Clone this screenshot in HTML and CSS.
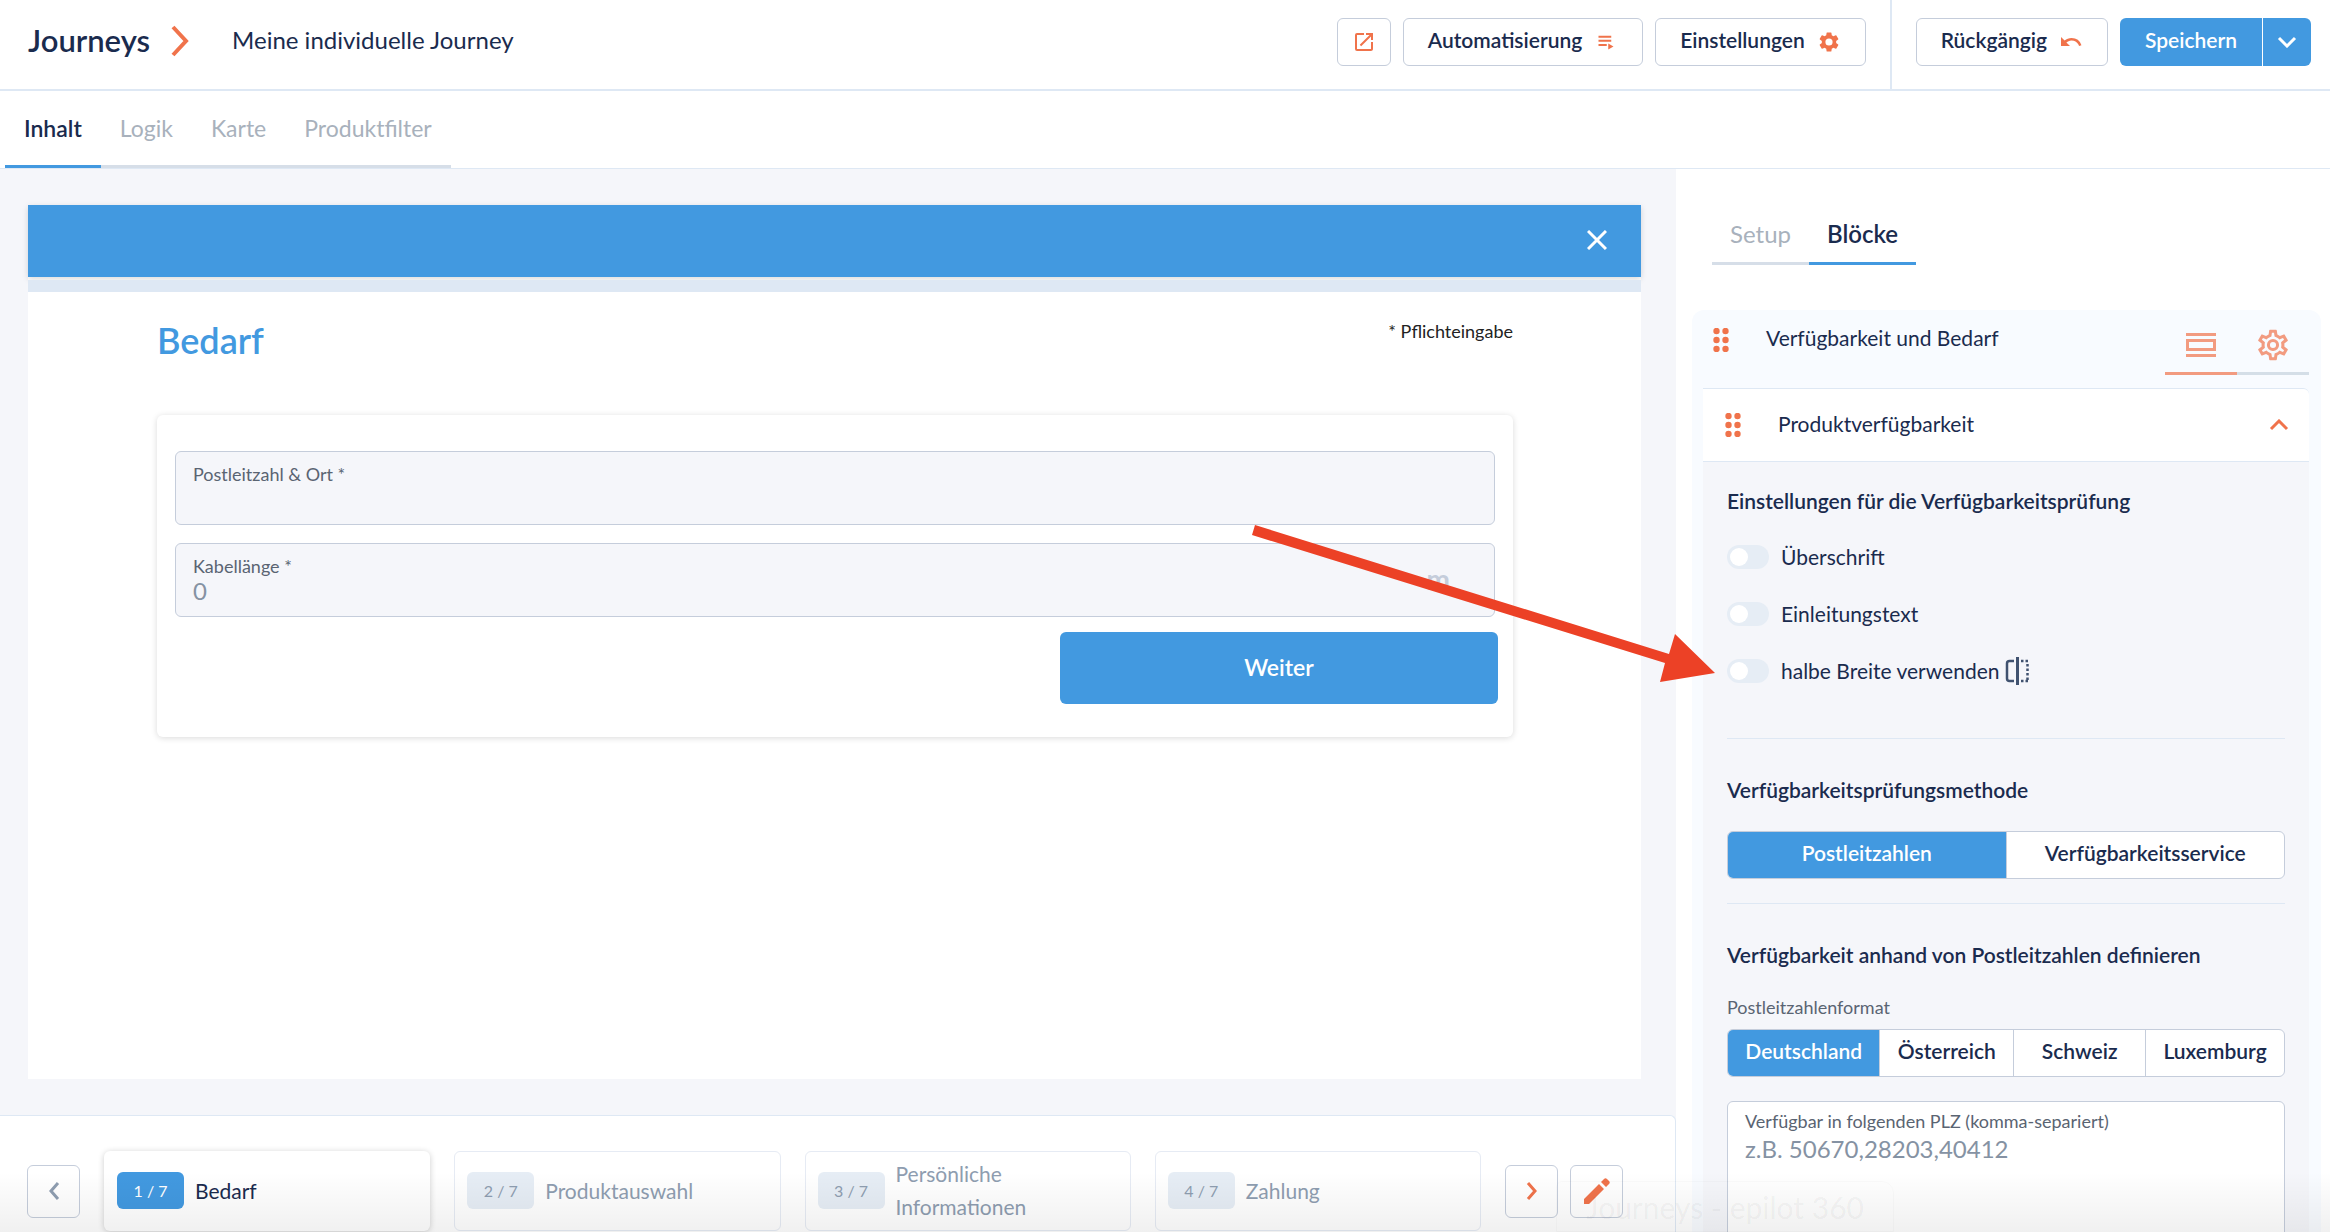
FILE: index.html
```html
<!DOCTYPE html>
<html lang="de">
<head>
<meta charset="utf-8">
<title>Journeys</title>
<link rel="stylesheet" href="styles.css">
</head>
<body>
<div class="app">
  <header class="topbar">
    <nav class="crumbs">
      <a class="crumb-root" href="#">Journeys</a>
      <svg class="crumb-sep" viewBox="0 0 20 32" width="20" height="32"><path d="M3 2l13 14L3 30" fill="none" stroke="currentColor" stroke-width="4"/></svg>
      <span class="crumb-name">Meine individuelle Journey</span>
    </nav>
    <div class="actions">
      <button class="btn btn-icon" type="button" aria-label="Öffnen"><svg viewBox="0 0 24 24" width="24" height="24" fill="currentColor"><path d="M19 19H5V5h7V3H5a2 2 0 0 0-2 2v14a2 2 0 0 0 2 2h14c1.100 0 2-.9 2-2v-7h-2v7zM14 3v2h3.590l-9.830 9.830 1.410 1.410L19 6.410V10h2V3h-7z"/></svg></button>
      <button class="btn" type="button"><span>Automatisierung</span><svg viewBox="-3 -3 32 32" width="24" height="24" fill="currentColor"><path d="M3 4.500h17v2.700H3zM3 10h17v2.700H3zM3 15.500h11v2.700H3zM16 15l7 4-7 4z"/></svg></button>
      <button class="btn" type="button"><span>Einstellungen</span><svg viewBox="0 0 24 24" width="24" height="24" fill="currentColor"><path d="M19.140 12.940c.04-.3.060-.61.060-.94 0-.32-.02-.64-.07-.94l2.030-1.580a.49.49 0 0 0 .12-.61l-1.920-3.320a.49.49 0 0 0-.59-.22l-2.390.96a7 7 0 0 0-1.620-.94l-.36-2.540a.48.48 0 0 0-.48-.41h-3.840a.47.47 0 0 0-.47.41l-.36 2.540c-.59.24-1.130.57-1.620.94l-2.390-.96a.47.47 0 0 0-.59.22L2.740 8.870a.47.47 0 0 0 .12.610l2.030 1.580c-.05.3-.09.63-.09.94s.02.640.070.940l-2.030 1.580a.49.49 0 0 0-.12.610l1.920 3.320c.12.220.370.290.590.220l2.390-.96c.5.380 1.030.7 1.620.940l.36 2.540c.05.240.240.410.480.410h3.840c.24 0 .44-.17.470-.41l.36-2.540c.59-.24 1.130-.56 1.620-.94l2.390.96c.22.080.470 0 .59-.22l1.920-3.320a.47.47 0 0 0-.12-.61l-2.010-1.580zM12 15.600a3.600 3.600 0 1 1 0-7.200 3.600 3.600 0 0 1 0 7.200z"/></svg></button>
    </div>
    <div class="actions actions-save">
      <button class="btn" type="button"><span>Rückgängig</span><svg viewBox="0 0 24 24" width="24" height="24" fill="currentColor"><path d="M12.500 8c-2.650 0-5.050.99-6.900 2.600L2 7v9h9l-3.620-3.620A8 8 0 0 1 20.100 16l2.370-.78A10.500 10.500 0 0 0 12.500 8z"/></svg></button>
      <div class="split">
        <button class="save" type="button">Speichern</button>
        <button class="save-more" type="button" aria-label="Mehr"><svg viewBox="0 0 20 12" width="20" height="12"><path d="M2 2l8 8 8-8" fill="none" stroke="currentColor" stroke-width="3"/></svg></button>
      </div>
    </div>
  </header>

  <nav class="tabs page-tabs">
    <a class="tab active" href="#">Inhalt</a><a class="tab" href="#">Logik</a><a class="tab" href="#">Karte</a><a class="tab" href="#">Produktfilter</a>
  </nav>

  <div class="workspace">
    <main class="editor">
      <div class="canvas">
        <section class="preview">
          <div class="preview-bar">
            <button class="close" type="button" aria-label="Schließen"><svg viewBox="0 0 20 20" width="20" height="20"><path d="M1 1l18 18M19 1L1 19" fill="none" stroke="currentColor" stroke-width="3"/></svg></button>
          </div>
          <div class="progress"></div>
          <div class="preview-body">
            <div class="preview-head">
              <h1>Bedarf</h1>
              <p>* Pflichteingabe</p>
            </div>
            <form class="form-card">
              <div class="field">
                <label for="plz">Postleitzahl &amp; Ort *</label>
                <input id="plz" type="text">
              </div>
              <div class="field field-unit">
                <label for="len">Kabellänge *</label>
                <input id="len" type="text" placeholder="0">
                <span class="unit">m</span>
              </div>
              <button class="next" type="button">Weiter</button>
            </form>
          </div>
        </section>
      </div>

      <footer class="steps">
        <button class="square prev" type="button" aria-label="Zurück"><svg viewBox="0 0 12 18" width="12" height="18"><path d="M10 1L3 9l7 8" fill="none" stroke="currentColor" stroke-width="3"/></svg></button>
        <div class="step-list">
          <a class="step current" href="#"><span class="badge">1 / 7</span><span>Bedarf</span></a>
          <a class="step" href="#"><span class="badge">2 / 7</span><span>Produktauswahl</span></a>
          <a class="step" href="#"><span class="badge">3 / 7</span><span>Persönliche Informationen</span></a>
          <a class="step" href="#"><span class="badge">4 / 7</span><span>Zahlung</span></a>
        </div>
        <div class="step-tools">
          <button class="square" type="button" aria-label="Weiter"><svg viewBox="0 0 12 18" width="12" height="18"><path d="M2 1l7 8-7 8" fill="none" stroke="currentColor" stroke-width="3"/></svg></button>
          <button class="square" type="button" aria-label="Bearbeiten"><svg viewBox="0 0 26 26" width="26" height="26" fill="currentColor"><path d="M0 21v5h5L20 11l-5-5zM17 4l5 5 3-3c1-1 1-2 0-3l-2-2c-1-1-2-1-3 0z"/></svg></button>
        </div>
      </footer>
    </main>

    <aside class="sidebar">
      <nav class="tabs side-tabs">
        <a class="tab" href="#">Setup</a><a class="tab active" href="#">Blöcke</a>
      </nav>
      <section class="block">
        <div class="block-head">
          <svg class="grip" viewBox="0 0 16 24" width="16" height="24" fill="currentColor"><circle cx="3.500" cy="3" r="3.200"/><circle cx="12.500" cy="3" r="3.200"/><circle cx="3.500" cy="12" r="3.200"/><circle cx="12.500" cy="12" r="3.200"/><circle cx="3.500" cy="21" r="3.200"/><circle cx="12.500" cy="21" r="3.200"/></svg>
          <h2>Verfügbarkeit und Bedarf</h2>
          <div class="view-tabs">
            <button class="view active" type="button" aria-label="Blöcke"><svg viewBox="0 0 30 24" width="30" height="24"><path d="M0 1.500h30M0 22.500h30" stroke="currentColor" stroke-width="3"/><path d="M1.500 7.500h27v9h-27z" fill="none" stroke="currentColor" stroke-width="3"/></svg></button>
            <button class="view" type="button" aria-label="Optionen"><svg viewBox="1.500 1.500 21 21" width="32" height="32" fill="currentColor"><path d="M19.430 12.980c.04-.32.070-.64.070-.98s-.03-.66-.07-.98l2.110-1.650a.5.5 0 0 0 .12-.64l-2-3.460a.5.5 0 0 0-.61-.22l-2.490 1a7.300 7.300 0 0 0-1.690-.98l-.38-2.650A.49.49 0 0 0 14 2h-4a.49.49 0 0 0-.49.420l-.38 2.650c-.61.250-1.170.590-1.690.980l-2.490-1a.5.5 0 0 0-.61.220l-2 3.460a.49.49 0 0 0 .12.640l2.110 1.650c-.04.320-.07.650-.07.980s.03.660.070.980l-2.110 1.650a.5.5 0 0 0-.12.640l2 3.460a.5.5 0 0 0 .61.220l2.490-1c.52.400 1.080.73 1.690.980l.38 2.650c.03.240.240.420.490.420h4c.25 0 .46-.18.490-.42l.38-2.650c.61-.25 1.170-.59 1.690-.98l2.490 1a.5.5 0 0 0 .61-.22l2-3.460a.5.5 0 0 0-.12-.64zm-1.980-1.710c.04.310.050.520.050.730s-.02.430-.05.730l-.14 1.130.89.700 1.080.840-.7 1.210-1.270-.51-1.040-.42-.9.680c-.43.320-.84.560-1.250.730l-1.060.43-.16 1.130-.2 1.350h-1.400l-.35-2.480-1.060-.43a5.700 5.700 0 0 1-1.230-.71l-.91-.7-1.060.43-1.270.510-.7-1.210 1.080-.84.890-.7-.14-1.130a8 8 0 0 1 0-1.480l.14-1.130-.89-.7-1.080-.84.700-1.210 1.270.510 1.040.42.900-.68c.43-.32.840-.56 1.250-.73l1.060-.43.350-2.480h1.390l.35 2.480 1.060.43c.43.180.830.410 1.230.710l.91.700 1.060-.43 1.270-.51.700 1.210-1.070.85-.89.700zM12 8a4 4 0 1 0 0 8 4 4 0 0 0 0-8zm0 6a2 2 0 1 1 0-4 2 2 0 0 1 0 4z"/></svg></button>
          </div>
        </div>
        <div class="item">
          <div class="item-head">
            <svg class="grip" viewBox="0 0 16 24" width="16" height="24" fill="currentColor"><circle cx="3.500" cy="3" r="3.200"/><circle cx="12.500" cy="3" r="3.200"/><circle cx="3.500" cy="12" r="3.200"/><circle cx="12.500" cy="12" r="3.200"/><circle cx="3.500" cy="21" r="3.200"/><circle cx="12.500" cy="21" r="3.200"/></svg>
            <h3>Produktverfügbarkeit</h3>
            <svg class="collapse" viewBox="0 0 20 12" width="20" height="12"><path d="M2 10l8-8 8 8" fill="none" stroke="currentColor" stroke-width="3"/></svg>
          </div>
          <div class="item-body">
            <section class="group switches">
              <h4>Einstellungen für die Verfügbarkeitsprüfung</h4>
              <label class="switch"><input type="checkbox">Überschrift</label>
              <label class="switch"><input type="checkbox">Einleitungstext</label>
              <label class="switch"><input type="checkbox"><span>halbe Breite verwenden</span><svg viewBox="0 0 24 28" width="24" height="28" fill="none" stroke="currentColor"><path d="M9 4H4.500A2.500 2.500 0 0 0 2 6.500v15A2.500 2.500 0 0 0 4.500 24H9" stroke-width="2.500"/><path d="M12.500 0v28" stroke-width="3"/><path d="M16 4h8M16 24h8" stroke-width="2.500" stroke-dasharray="2.500 2"/><path d="M22.500 7v16" stroke-width="2.500" stroke-dasharray="2.500 2"/></svg></label>
            </section>
            <section class="group">
              <h4>Verfügbarkeitsprüfungsmethode</h4>
              <div class="segments halves">
                <button class="on" type="button">Postleitzahlen</button><button type="button">Verfügbarkeitsservice</button>
              </div>
            </section>
            <section class="group">
              <h4>Verfügbarkeit anhand von Postleitzahlen definieren</h4>
              <p class="caption">Postleitzahlenformat</p>
              <div class="segments">
                <button class="on" type="button">Deutschland</button><button type="button">Österreich</button><button type="button">Schweiz</button><button type="button">Luxemburg</button>
              </div>
              <div class="area">
                <label for="codes">Verfügbar in folgenden PLZ (komma-separiert)</label>
                <textarea id="codes" placeholder="z.B. 50670,28203,40412"></textarea>
              </div>
            </section>
          </div>
        </div>
      </section>
    </aside>
  </div>

  <svg class="arrow" viewBox="0 0 464 158" width="464" height="158"><path d="M3 0L417 129l6-20 40 39-55 9 5-19L0 10z" fill="#ec4126"/></svg>
  <div class="shade"></div>
  <div class="status">Journeys - epilot 360</div>
</div>
</body>
</html>
```
FILE: styles.css
```css
:root {
  --navy: #1a2b4e;
  --blue: #4299e0;
  --orange: #f0734b;
  --line: #dee8f4;
  --border: #c5cddb;
  --canvas: #f5f6fa;
  --muted: #a8b1bc;
}
* { box-sizing: border-box; }
body, h1, h2, h3, h4, p { margin: 0; }
body, button, input, textarea { font-family: Lato, "Noto Sans", sans-serif; }
body { color: var(--navy); background: #fff; font-size: 21px; line-height: 24px; }
a { color: inherit; text-decoration: none; }
button { padding: 0; border: 0; background: none; color: inherit; font-size: 21px; line-height: 24px; cursor: pointer; }
svg { display: block; flex: none; }
h2, h3 { font-size: 21px; font-weight: 400; }
h4 { font-size: 21px; font-weight: 600; }

.app { position: relative; height: 100vh; display: flex; flex-direction: column; overflow: hidden; }

.topbar { display: flex; align-items: stretch; height: 91px; flex: none; border-bottom: 2px solid var(--line); }
.crumbs { flex: 1; display: flex; align-items: center; padding: 0 0 7px 28px; }
.crumb-root { padding-bottom: 2px; font-size: 31px; line-height: 32px; font-weight: 600; }
.crumb-sep { margin: 0 42px 0 20px; color: var(--orange); }
.crumb-name { padding-bottom: 2px; font-size: 24px; }
.actions { display: flex; align-items: flex-start; gap: 12px; padding: 18px 24px 0; }
.actions-save { padding-right: 19px; border-left: 2px solid var(--line); }
.btn { display: flex; align-items: center; gap: 12px; height: 48px; padding: 0 24px; border: 1px solid var(--border); border-radius: 6px; background: #fff; font-weight: 600; }
.btn span { padding-bottom: 4px; }
.btn svg { color: var(--orange); }
.btn-icon { padding: 0 14px; }
.split { display: flex; gap: 1px; height: 48px; color: #fff; }
.save, .save-more { display: grid; place-items: center; background: var(--blue); font-weight: 600; }
.save { padding: 0 25px 4px; border-radius: 6px 0 0 6px; }
.save-more { width: 48px; border-radius: 0 6px 6px 0; }

.tabs { display: flex; font-size: 24px; color: var(--muted); }
.tab { padding: 0 18px; border-bottom: 3px solid #d6dee8; }
.tab.active { color: var(--navy); font-weight: 600; border-color: var(--blue); }
.page-tabs { flex: none; height: 78px; padding-left: 5px; border-bottom: 1px solid var(--line); font-size: 23px; line-height: 74px; }
.page-tabs .tab { padding: 0 19px; }

.workspace { flex: 1; min-height: 0; display: grid; grid-template-columns: minmax(0, 1fr) 654px; }
.editor { display: flex; flex-direction: column; min-height: 0; background: var(--canvas); }
.canvas { flex: 1; display: flex; padding: 36px 35px 36px 28px; }
.preview { flex: 1; display: flex; flex-direction: column; background: #fff; }
.preview-bar { display: flex; justify-content: flex-end; align-items: center; height: 72px; padding: 0 34px 2px; background: var(--blue); color: #fff; box-shadow: 0 2px 6px rgba(0, 0, 0, .15); }
.progress { height: 12px; margin-top: 3px; background: var(--line); }
.preview-body { padding: 24px 128px 24px 129px; }
.preview-head { display: flex; justify-content: space-between; height: 99px; }
.preview-head h1 { font-size: 36px; line-height: 48px; font-weight: 600; color: var(--blue); }
.preview-head p { font-size: 18px; line-height: 30px; color: #222; }
.form-card { display: flex; flex-direction: column; gap: 18px; padding: 36px 18px 33px; border-radius: 6px; background: #fff; box-shadow: 0 1px 6px rgba(0, 0, 0, .15); }
.field { position: relative; height: 74px; padding: 11px 17px 0; border: 1px solid var(--border); border-radius: 6px; background: var(--canvas); }
.field label, .area label { display: block; font-size: 18px; line-height: 22px; color: #5a6472; }
.field input { display: block; width: 100%; height: 26px; padding: 0; border: 0; background: none; font-size: 24px; outline: 0; }
::placeholder { color: #8592a3; opacity: 1; }
.unit { position: absolute; right: 44px; top: 20px; font-size: 28px; line-height: 30px; font-weight: 700; color: var(--border); }
.next { align-self: flex-end; width: 438px; height: 72px; margin: -3px -3px 0 0; padding-bottom: 2px; border-radius: 6px; background: var(--blue); color: #fff; font-size: 23px; font-weight: 600; }

.steps { display: flex; align-items: center; gap: 24px; height: 117px; flex: none; padding: 35px 52px 1px 27px; border: 1px solid var(--line); border-left: 0; border-bottom: 0; border-top-right-radius: 6px; background: #fff; }
.square { display: grid; place-items: center; width: 53px; height: 53px; border: 1px solid var(--border); border-radius: 6px; background: #fff; color: var(--orange); }
.prev { color: #8e9db0; }
.step-list { flex: 1; display: grid; grid-template-columns: repeat(4, minmax(0, 1fr)); gap: 24px; }
.step { display: flex; align-items: center; gap: 11px; height: 80px; padding: 0 12px 2px; border: 1px solid #e6ebf4; border-radius: 6px; color: #8e9db0; line-height: 33px; }
.badge { flex: none; width: 67px; height: 37px; border-radius: 6px; background: #e6edf5; font-size: 16px; line-height: 37px; text-align: center; }
.current { border-color: transparent; color: var(--navy); box-shadow: 0 1px 6px rgba(0, 0, 0, .2); }
.current .badge { background: var(--blue); color: #fff; }
.step-tools { display: flex; gap: 12px; }

.sidebar { padding: 45px 9px 0 16px; background: #fff; overflow: hidden; }
.side-tabs { height: 51px; margin: 0 0 45px 20px; line-height: 40px; }
.block { padding: 0 12px 0 11px; border-radius: 12px; background: #f8fbff; }
.block-head { display: flex; height: 78px; padding-left: 10px; }
.grip { color: var(--orange); }
.block-head .grip { margin-top: 18px; }
.block-head h2 { flex: 1; margin: 16px 0 0 37px; }
.view-tabs { display: flex; height: 65px; color: var(--orange); opacity: .7; }
.view { display: grid; place-items: center; width: 72px; padding-top: 8px; border-bottom: 3px solid #c5d2de; }
.view.active { border-color: var(--orange); }
.item-head { display: flex; align-items: center; height: 74px; padding: 0 20px 0 22px; border: solid var(--line); border-width: 1px 0; border-top-right-radius: 6px; background: #fff; }
.item-head h3 { flex: 1; margin-left: 37px; padding-bottom: 2px; }
.collapse { color: var(--orange); }
.item-body { padding: 0 24px; background: var(--canvas); }
.group { padding: 39px 0 24px; border-top: 1px solid var(--line); }
.group h4 { margin-bottom: 29px; }
.switches { padding: 27px 0 22px; border: 0; }
.switches h4 { margin-bottom: 32px; }
.switch { display: flex; align-items: center; height: 24px; margin-bottom: 33px; }
.switch input { flex: none; appearance: none; width: 42px; height: 24px; margin: 0 12px 0 0; padding: 3px; border-radius: 12px; background: #e6edf5; }
.switch input::before { content: ""; display: block; width: 18px; height: 18px; border-radius: 50%; background: #fff; }
.switch svg { margin-left: 6px; color: #40526f; }
.segments { display: flex; height: 48px; border: 1px solid var(--border); border-radius: 6px; background: #fff; overflow: hidden; }
.segments button { flex: 1 1 auto; min-width: 132px; padding: 0 16px 5px; font-weight: 600; }
.segments button + button { border-left: 1px solid var(--border); }
.segments .on { background: var(--blue); color: #fff; }
.halves button { flex: 1 1 0; }
.caption { margin-bottom: 11px; font-size: 18px; line-height: 22px; color: #5a6472; }
.area { height: 240px; margin-top: 24px; padding: 8px 17px; border: 1px solid var(--border); border-radius: 6px; background: #fff; }
.area textarea { display: block; width: 100%; height: 190px; padding: 0; border: 0; background: none; resize: none; font-size: 24px; line-height: 34px; outline: 0; }

.arrow { position: absolute; left: 1252px; top: 525px; }
.shade { position: absolute; left: 0; right: 0; bottom: 0; height: 60px; background: linear-gradient(transparent, rgba(0, 0, 0, .06)); pointer-events: none; }
.status { position: absolute; left: 1556px; bottom: 0; height: 51px; padding: 0 29px; border: 1px solid rgba(0, 0, 0, .02); border-radius: 6px 12px 0 0; font-size: 30px; line-height: 50px; color: rgba(0, 0, 0, .05); pointer-events: none; }
```
